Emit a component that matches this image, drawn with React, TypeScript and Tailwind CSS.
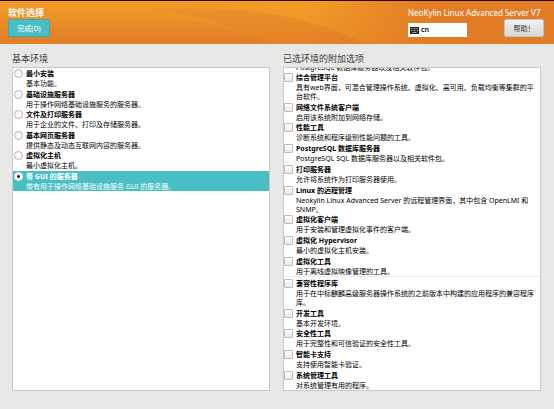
import React from "react";

type Item = { title: string; note: string };

const environments: Item[] = [
  { title: "最小安装", note: "基本功能。" },
  { title: "基础设施服务器", note: "用于操作网络基础设施服务的服务器。" },
  { title: "文件及打印服务器", note: "用于企业的文件、打印及存储服务器。" },
  { title: "基本网页服务器", note: "提供静态及动态互联网内容的服务器。" },
  { title: "虚拟化主机", note: "最小虚拟化主机。" },
  { title: "带 GUI 的服务器", note: "带有用于操作网络基础设施服务 GUI 的服务器。" },
];

const specificAddons: Item[] = [
  { title: "综合管理平台", note: "具有web界面，可混合管理操作系统、虚拟化、高可用、负载均衡等集群的平台软件。" },
  { title: "网络文件系统客户端", note: "启用该系统附加到网络存储。" },
  { title: "性能工具", note: "诊断系统和程序级别性能问题的工具。" },
  { title: "PostgreSQL 数据库服务器", note: "PostgreSQL SQL 数据库服务器以及相关软件包。" },
  { title: "打印服务器", note: "允许将系统作为打印服务器使用。" },
  { title: "Linux 的远程管理", note: "Neokylin Linux Advanced Server 的远程管理界面，其中包含 OpenLMI 和 SNMP。" },
  { title: "虚拟化客户端", note: "用于安装和管理虚拟化事件的客户端。" },
  { title: "虚拟化 Hypervisor", note: "最小的虚拟化主机安装。" },
  { title: "虚拟化工具", note: "用于离线虚拟映像管理的工具。" },
];

const commonAddons: Item[] = [
  { title: "兼容性程序库", note: "用于在中标麒麟高级服务器操作系统的之前版本中构建的应用程序的兼容程序库。" },
  { title: "开发工具", note: "基本开发环境。" },
  { title: "安全性工具", note: "用于完整性和可信验证的安全性工具。" },
  { title: "智能卡支持", note: "支持使用智能卡验证。" },
  { title: "系统管理工具", note: "对系统管理有用的程序。" },
];

function Label({ item }: { item: Item }) {
  return (
    <span className="min-w-0 flex-1">
      <span className="block text-[7px] leading-[11px] font-bold">{item.title}</span>
      <span className="block text-[7px] leading-[9px]">{item.note}</span>
    </span>
  );
}

function Environment({ item }: { item: Item }) {
  return (
    <label className="flex gap-[3px] px-px has-checked:bg-[#49bec4] has-checked:text-white">
      <input
        type="radio"
        name="environment"
        defaultChecked={item.title === "带 GUI 的服务器"}
        className="mt-px size-[9px] shrink-0 appearance-none rounded-full border border-[#b4b4b4] bg-[#f8f8f8] checked:border-[#eee] checked:bg-[radial-gradient(#3b2228_0_1px,#fff_2px)]"
      />
      <Label item={item} />
    </label>
  );
}

function Addon({ item }: { item: Item }) {
  return (
    <label className="flex gap-[3px] pr-1">
      <input
        type="checkbox"
        className="mt-px size-[9px] shrink-0 appearance-none rounded-[1px] border border-[#bcbcbc] bg-linear-to-b from-white to-[#eaeaea] checked:bg-[#49bec4]"
      />
      <Label item={item} />
    </label>
  );
}

function HeaderWaves() {
  return (
    <svg className="absolute inset-0 size-full" viewBox="0 0 554 43" preserveAspectRatio="none" aria-hidden="true">
      <defs>
        <linearGradient id="fade-right" x1="0" x2="1" y1="0" y2="0">
          <stop offset=".55" stopColor="#e07a26" stopOpacity="0" />
          <stop offset=".78" stopColor="#e07a26" stopOpacity=".9" />
        </linearGradient>
        <linearGradient id="fade-down" x1="0" x2="0" y1="0" y2="1">
          <stop offset="0" stopColor="#de7a26" stopOpacity="0" />
          <stop offset="1" stopColor="#de7a26" stopOpacity=".6" />
        </linearGradient>
      </defs>
      <path d="M230 5Q310 16 365 43H554V0H260Z" fill="#f6a028" opacity=".45" />
      <path d="M60 14Q200 8 270 43H0V14Z" fill="url(#fade-down)" />
      <path d="M150 8Q290 2 365 43H270Q220 16 150 8Z" fill="#de7a26" opacity=".25" />
      <path d="M0 0H554V43H0Z" fill="url(#fade-right)" />
    </svg>
  );
}

export default function App() {
  return (
    <div className="flex h-screen flex-col bg-[#e8e8e7] font-['Noto_Sans','Noto_Sans_CJK_SC',sans-serif] text-black">
      <header className="relative flex h-11 shrink-0 justify-between border-t border-[#2c0500] bg-linear-to-b from-[#f29b27] to-[#e58527] pt-1.5 pr-2.5 pl-2 text-white">
        <HeaderWaves />
        <div className="relative">
          <h1 className="text-[9px] leading-[11px] font-bold">软件选择</h1>
          <button className="mt-px block h-[18px] w-[42px] rounded-xs border border-[#3cabae] bg-[#49bec4] text-[7px] leading-none">完成(D)</button>
        </div>
        <div className="relative min-w-[136px]">
          <p className="text-[8px] leading-3">NeoKylin Linux Advanced Server V7</p>
          <div className="flex items-start justify-between">
            <button className="mt-1 flex h-3.5 w-[59px] items-center gap-0.5 bg-white pl-0.5 text-[7px] font-bold text-[#333]">
              <svg viewBox="0 0 9 7" className="h-[7px] w-[9px]" aria-hidden="true">
                <path d="M0 0H9V7H0Z" fill="#222" />
                <path d="M1 1.5H8M1 3.5H8" stroke="#fff" strokeDasharray="1 .5" strokeWidth=".6" />
                <path d="M2.5 5.5H6.5" stroke="#fff" strokeWidth=".6" />
              </svg>
              cn
            </button>
            <button className="h-[18px] w-10 rounded-xs border border-[#c4c4c2] bg-linear-to-b from-[#f2f2f2] to-[#d6d6d6] text-[7px] leading-none text-[#333]">帮助！</button>
          </div>
        </div>
      </header>

      <main className="grid min-h-0 flex-1 grid-cols-2 gap-[13px] pt-2 pr-[13px] pb-[18px] pl-3">
        <section className="flex min-h-0 flex-col">
          <h2 className="mb-0.5 text-[9px] leading-[13px] text-[#3c3c3c]">基本环境</h2>
          <div className="min-h-0 flex-1 border border-[#c8c8c7] bg-white">
            <div className="flex h-[123px] flex-col justify-between">
              {environments.map((item) => (
                <Environment key={item.title} item={item} />
              ))}
            </div>
          </div>
        </section>

        <section className="flex min-h-0 flex-col">
          <h2 className="mb-0.5 text-[9px] leading-[13px] text-[#3c3c3c]">已选环境的附加选项</h2>
          <div className="flex min-h-0 flex-1 flex-col overflow-hidden border border-[#c8c8c7] bg-white">
            <div className="flex h-1 shrink-0 items-end overflow-hidden pl-3 text-[7px] leading-[9px]">
              <p>PostgreSQL 数据库服务器以及相关软件包。</p>
            </div>
            <div className="flex min-h-0 flex-1 flex-col justify-between">
              {specificAddons.map((item) => (
                <Addon key={item.title} item={item} />
              ))}
              <hr className="border-[#ececec]" />
              {commonAddons.map((item) => (
                <Addon key={item.title} item={item} />
              ))}
            </div>
          </div>
        </section>
      </main>
    </div>
  );
}
